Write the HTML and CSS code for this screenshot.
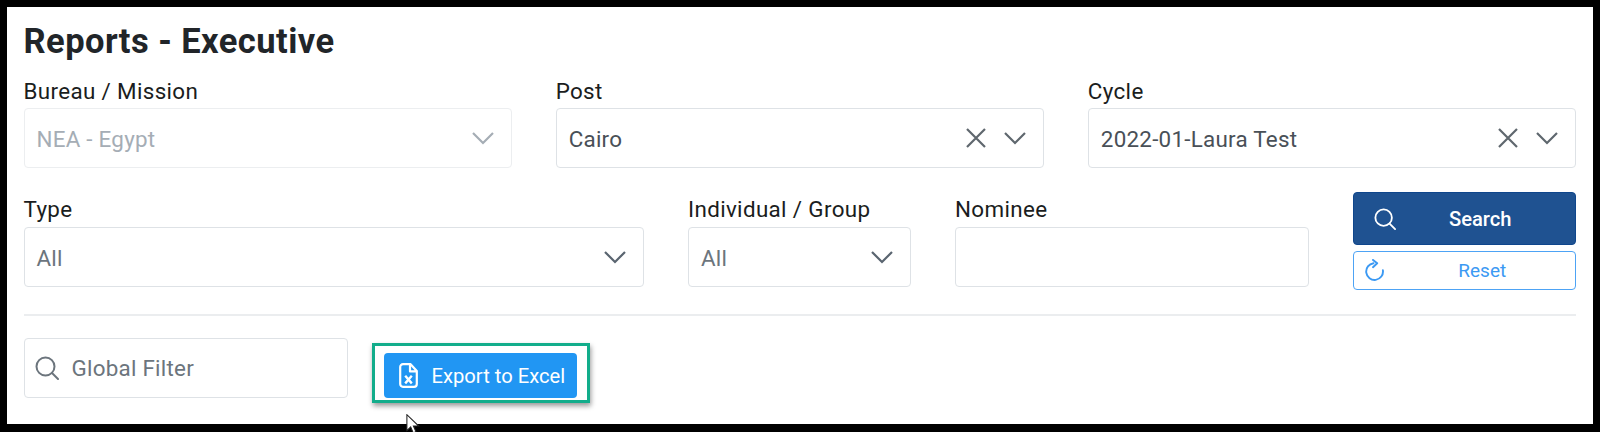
FILE: index.html
```html
<!DOCTYPE html>
<html lang="en">
<head>
<meta charset="utf-8">
<title>Reports - Executive</title>
<link rel="stylesheet" href="styles.css">
</head>
<body>
<svg class="defs" width="0" height="0" aria-hidden="true">
  <symbol id="chev" viewBox="0 0 24 14"><path d="M2 2l10 10L22 2" fill="none" stroke="currentColor" stroke-width="2.2"/></symbol>
  <symbol id="times" viewBox="0 0 22 22"><path d="M2 2l18 18M20 2L2 20" fill="none" stroke="currentColor" stroke-width="2.2"/></symbol>
  <symbol id="search" viewBox="0 0 24 24"><circle cx="10.5" cy="10.5" r="9" fill="none" stroke="currentColor" stroke-width="2"/><path d="M17 17l6 6" fill="none" stroke="currentColor" stroke-width="2" stroke-linecap="round"/></symbol>
</svg>
<main class="panel">
  <h1 class="title">Reports - Executive</h1>
  <div class="row-one">
    <div class="field">
      <label class="label">Bureau / Mission</label>
      <div class="control disabled"><span class="value">NEA - Egypt</span><svg class="chev"><use href="#chev"/></svg></div>
    </div>
    <div class="field">
      <label class="label">Post</label>
      <div class="control"><span class="value">Cairo</span><svg class="times"><use href="#times"/></svg><svg class="chev"><use href="#chev"/></svg></div>
    </div>
    <div class="field">
      <label class="label">Cycle</label>
      <div class="control"><span class="value">2022-01-Laura Test</span><svg class="times"><use href="#times"/></svg><svg class="chev"><use href="#chev"/></svg></div>
    </div>
  </div>
  <div class="row-two">
    <div class="field">
      <label class="label tall">Type</label>
      <div class="control"><span class="value muted">All</span><svg class="chev strong"><use href="#chev"/></svg></div>
    </div>
    <div class="field">
      <label class="label tall">Individual / Group</label>
      <div class="control"><span class="value muted">All</span><svg class="chev strong"><use href="#chev"/></svg></div>
    </div>
    <div class="field">
      <label class="label tall">Nominee</label>
      <div class="control"></div>
    </div>
    <div class="actions">
      <button class="btn-search"><svg class="btn-icon"><use href="#search"/></svg><span class="btn-text">Search</span></button>
      <button class="btn-reset">
        <svg class="reset-icon" viewBox="0 0 19 22"><path d="M8.5 4.2A8.4 8.4 0 1 0 17.9 11.3" fill="none" stroke="currentColor" stroke-width="1.9" stroke-linecap="round"/><path d="M8 .9l4.2 3.4L8 8.2" fill="none" stroke="currentColor" stroke-width="1.9" stroke-linecap="round" stroke-linejoin="round"/></svg>
        <span class="btn-text">Reset</span>
      </button>
    </div>
  </div>
  <hr class="divider">
  <div class="row-three">
    <div class="control filter"><svg class="filter-icon"><use href="#search"/></svg><span class="value muted filter-text">Global Filter</span></div>
    <div class="highlight">
      <button class="btn-export">
        <svg class="export-icon" viewBox="0 0 19 25"><path d="M4 1.2h7.6L17.8 8v13a2.8 2.8 0 0 1-2.8 2.8H4A2.8 2.8 0 0 1 1.2 21V4A2.8 2.8 0 0 1 4 1.2zM11 1.5V8.4h6.6" fill="none" stroke="currentColor" stroke-width="2.2" stroke-linejoin="round"/><path d="M6.2 12.8l6.6 7.6M12.8 12.8l-6.6 7.6" fill="none" stroke="currentColor" stroke-width="2.4"/></svg>
        <span>Export to Excel</span>
      </button>
    </div>
  </div>
</main>
<svg class="cursor" viewBox="0 0 13 19"><path d="M.7.7v15l3.6-3.4 2.4 5.6 2.6-1.1-2.4-5.4h5z" fill="#fff" stroke="#222" stroke-width="1"/></svg>
</body>
</html>
```
FILE: styles.css
```css
* { box-sizing: border-box; }
html, body { margin: 0; height: 432px; overflow: hidden; background: #000; }
body { position: relative; font-family: Roboto, "Liberation Sans", sans-serif; color: #212529; }
.defs { position: absolute; }
.panel { margin: 7px 7px 0; height: 417px; background: #fff; padding: 0 17px 0 16.5px; display: flex; flex-direction: column; }
.title { margin: 0; padding-top: 14px; font-size: 34.5px; letter-spacing: .45px; line-height: 40px; font-weight: 700; color: #212529; }
.row-one { display: grid; grid-template-columns: repeat(3, 1fr); column-gap: 44px; margin-top: 18px; }
.row-two { display: grid; grid-template-columns: 620.5px 223px 354px 222.5px; column-gap: 44px; margin-top: 29px; position: relative; }
.field { display: flex; flex-direction: column; }
.label { font-size: 22.4px; letter-spacing: .35px; line-height: 24px; height: 29px; color: #1a1d20; white-space: nowrap; }
.label.tall { height: 30px; }
.control { height: 60px; border: 1px solid #dee2e6; border-radius: 4px; background: #fff; display: flex; align-items: center; padding: 0 16px 0 12px; color: #495057; }
.value { flex: 1; font-size: 22.4px; letter-spacing: .25px; line-height: 24px; margin-top: 2px; white-space: nowrap; }
.muted { color: #6c757d; }
.filter-text { margin-top: 0; }
.disabled { border-color: #eceef0; }
.disabled .value { color: #a5adb5; }
.disabled .chev { color: #a5adb5; }
.chev { width: 24px; height: 14px; color: #5f676e; flex: none; }
.chev.strong { color: #5a6570; }
.times { width: 22px; height: 22px; margin-right: 16px; color: #5f676e; flex: none; }
.actions { display: flex; flex-direction: column; gap: 6px; margin-top: -5px; }
.btn-search, .btn-reset { width: 100%; border-radius: 4px; display: flex; align-items: center; font-family: inherit; padding: 0; position: relative; }
.btn-search { height: 53px; background: #1f5291; border: 1px solid #0f468c; color: #fff; font-size: 20.2px; font-weight: 500; justify-content: center; padding-left: 32px; }
.btn-reset { height: 39px; background: #fff; border: 1px solid #4da3f5; color: #3b99f3; font-size: 19px; justify-content: center; padding-left: 36px; }
.btn-icon { width: 22px; height: 22px; position: absolute; left: 20px; top: 50%; transform: translateY(-50%); }
.reset-icon { width: 19px; height: 22px; position: absolute; left: 11px; top: 7px; }
.divider { border: 0; border-top: 2px solid #ebedef; margin: 24px 0 0; width: 100%; }
.row-three { display: flex; align-items: flex-start; margin-top: 22px; }
.filter { width: 324px; padding-left: 10px; flex: none; }
.filter-icon { width: 24px; height: 24px; color: #6c757d; margin-right: 13px; flex: none; }
.highlight { margin: 5px 0 0 24px; width: 218px; height: 60px; border: 3px solid #12ad8b; box-shadow: 1px 3px 5px rgba(0, 0, 0, .4); padding: 7px 0 0 9px; }
.btn-export { width: 193px; height: 45px; background: #2196f3; border: 0; border-radius: 4px; color: #fff; font-family: inherit; font-size: 20.2px; display: flex; align-items: center; padding: 0 0 0 15px; white-space: nowrap; }
.export-icon { width: 19px; height: 25px; margin-right: 14px; flex: none; }
.cursor { position: absolute; left: 406px; top: 414px; width: 14px; height: 20px; }
```
